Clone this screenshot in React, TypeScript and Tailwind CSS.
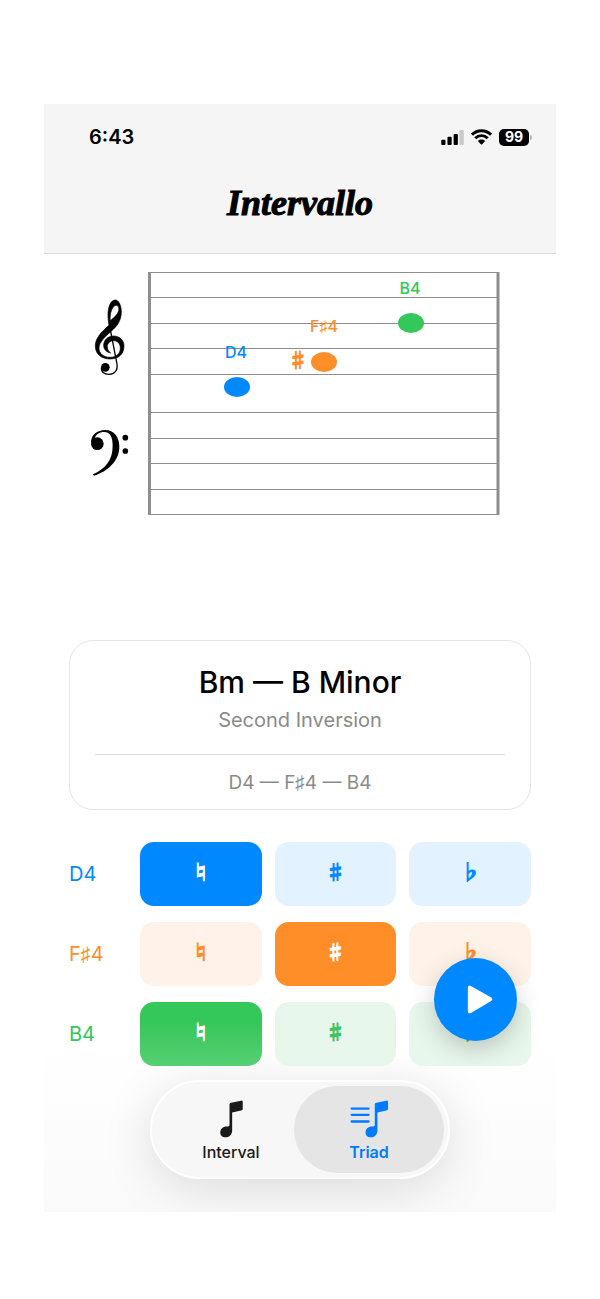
import { useState } from "react";
import clsx from "clsx";

type Accidental = "natural" | "sharp" | "flat";
type Tab = "interval" | "triad";

const ACCIDENTALS: { id: Accidental; glyph: string }[] = [
  { id: "natural", glyph: "♮" },
  { id: "sharp", glyph: "♯" },
  { id: "flat", glyph: "♭" },
];

const NOTES = [
  {
    letter: "D",
    octave: 4,
    text: "text-[#0088ff]",
    on: "bg-[#0088ff] text-white",
    off: "bg-[#e3f2ff] text-[#0088ff]",
  },
  {
    letter: "F",
    octave: 4,
    text: "text-[#ff8d28]",
    on: "bg-[#ff8d28] text-white",
    off: "bg-[#fff2e8] text-[#ff8d28]",
  },
  {
    letter: "B",
    octave: 4,
    text: "text-[#34c759]",
    on: "bg-linear-to-b from-[#34c759] from-30% to-[#56cf73] text-white",
    off: "bg-[#e8f7ec] text-[#3cc25f]",
  },
];

const STAFF_LINES = [18, 43, 69, 94, 120, 158, 184, 209, 235, 260];

function noteName(letter: string, octave: number, accidental: Accidental) {
  const sign = accidental === "sharp" ? "♯" : accidental === "flat" ? "♭" : "";
  return `${letter}${sign}${octave}`;
}

function SignalIcon() {
  return (
    <svg viewBox="0 0 69 46" className="h-[15px] w-[23px]" aria-hidden="true">
      <rect x="0" y="30" width="13" height="16" rx="3" />
      <rect x="19" y="21" width="13" height="25" rx="3" />
      <rect x="38" y="12" width="13" height="34" rx="3" />
      <rect x="56" y="0" width="13" height="46" rx="3" fill="#c8c8c8" />
    </svg>
  );
}

function WifiIcon() {
  return (
    <svg viewBox="0 0 64 48" className="h-4 w-[21px]" aria-hidden="true">
      <g fill="none" stroke="currentColor" strokeWidth="9">
        <path d="M3 17 C19 1 45 1 61 17" />
        <path d="M13 28 C24 17 40 17 51 28" />
      </g>
      <path d="M21 36 C27 30 37 30 43 36 L34 46 Q32 48 30 46 Z" />
    </svg>
  );
}

function PlayIcon() {
  return (
    <svg viewBox="0 0 76 86" className="ml-2 h-[29px] w-[26px]" fill="currentColor" aria-hidden="true">
      <path d="M2 8 Q2 -1 11 3 L70 36 Q78 42 70 48 L11 83 Q2 87 2 78 Z" />
    </svg>
  );
}

const NOTE_PATH =
  "M31 13 Q31 9 36 8 L66 2 Q71 1 71 6 V27 Q71 31 66 32 L39 38 V92 C39 104 30 113 19 113 C10 113 3 107 3 98 C3 88 11 80 22 80 C28 80 31 80 31 75 Z";

function IntervalIcon() {
  return (
    <svg viewBox="0 0 74 115" className="h-[38px] w-[25px]" fill="currentColor" aria-hidden="true">
      <path d={NOTE_PATH} />
    </svg>
  );
}

function TriadIcon() {
  return (
    <svg viewBox="0 0 118 115" className="h-[38px] w-[39px]" fill="currentColor" aria-hidden="true">
      <path d={NOTE_PATH} transform="translate(44 0)" />
      <path d="M5 26H56M5 45H56M5 65H56" stroke="currentColor" strokeWidth="7" strokeLinecap="round" />
    </svg>
  );
}

function GrandStaff({ names }: { names: string[] }) {
  return (
    <svg viewBox="0 0 512 265" className="block w-full" role="img" aria-label="Grand staff">
      {/* clefs */}
      <g transform="translate(36 36) scale(0.3333)" fill="#000">
        <path
          fillRule="evenodd"
          stroke="#000"
          strokeWidth="2"
          d="M87 106 C62 127 46 146 46 168 C46 192 64 207 90 207 C116 207 132 192 132 168 C132 150 118 138 101 138 C84 138 71 150 71 166 C71 178 79 187 92 189 C84 183 82 177 82 170 C82 160 90 152 101 152 C112 152 121 160 121 174 C121 192 108 202 90 202 C70 202 57 190 57 174 C57 156 78 138 100 118 C114 105 124 88 124 66 C124 46 116 30 106 30 C92 30 84 50 84 75 C84 88 86 98 87 106 Z M91 92 C88 68 98 46 109 46 C116 46 118 55 116 63 C112 75 103 82 91 92 Z"
        />
        <path
          d="M88 104 L111 222 C114 242 103 253 87 253 C72 253 64 245 64 234"
          fill="none"
          stroke="#000"
          strokeWidth="4"
        />
        <circle cx="76" cy="232" r="13" />
        <circle cx="52" cy="461" r="19" />
        <path d="M33 459 C32 435 52 420 75 420 C103 420 118 442 118 470 C118 515 80 545 42 557 L39 553 C74 538 98 512 98 468 C98 440 90 426 72 426 C58 426 47 433 44 446 Z" />
        <circle cx="136" cy="443" r="8.5" />
        <circle cx="136" cy="483" r="8.5" />
      </g>

      {/* staff */}
      <g stroke="#8e8e8e">
        {STAFF_LINES.map((y) => (
          <path key={y} d={`M104 ${y}.5H455`} strokeWidth="1" />
        ))}
        <path d="M105.5 18V261M454 18V261" strokeWidth="3" />
      </g>

      {/* notes */}
      <g fontFamily="Inter, sans-serif" fontSize="16" fontWeight="500" textAnchor="middle">
        <g fill="#0088ff">
          <ellipse cx="193" cy="133" rx="13" ry="10" />
          <text x="192" y="104">{names[0]}</text>
        </g>
        <g fill="#ff8d28">
          <text
            x="254"
            y="114"
            fontFamily="'Noto Sans CJK JP', 'DejaVu Sans', sans-serif"
            fontSize="20"
            fontWeight="700"
            stroke="#ff8d28"
            strokeWidth="1"
          >
            ♯
          </text>
          <ellipse cx="280" cy="108" rx="13" ry="10" />
          <text x="280" y="78">{names[1]}</text>
        </g>
        <g fill="#34c759">
          <ellipse cx="367" cy="69" rx="13" ry="10" />
          <text x="366" y="40">{names[2]}</text>
        </g>
      </g>
    </svg>
  );
}

export default function App() {
  const [tab, setTab] = useState<Tab>("triad");
  const [selected, setSelected] = useState<Accidental[]>(["natural", "sharp", "natural"]);

  const names = NOTES.map((n, i) => noteName(n.letter, n.octave, selected[i]));

  function choose(row: number, accidental: Accidental) {
    setSelected((prev) => prev.map((a, i) => (i === row ? accidental : a)));
  }

  return (
    <div className="min-h-screen bg-white px-11 py-[104px] font-['Inter',sans-serif] text-black">
      <div className="relative overflow-hidden bg-linear-to-b from-white from-85% to-[#fafafa]">
        <header className="border-b border-[#dcdcdc] bg-[#f5f5f5] pb-[26px]">
          <div className="flex h-[66px] items-center justify-between pr-6 pl-[45px]">
            <span className="text-xl font-semibold">6:43</span>
            <div className="flex items-center gap-[7px]">
              <SignalIcon />
              <WifiIcon />
              <div className="flex items-center gap-px">
                <span className="flex h-[17px] w-[30px] items-center justify-center rounded-[5px] bg-black text-sm font-bold text-white">
                  99
                </span>
                <span className="h-[5px] w-[2px] rounded-r-full bg-[#b5b5b5]" />
              </div>
            </div>
          </div>
          <h1 className="pt-[10px] text-center font-['Liberation_Serif',serif] text-4xl leading-[47px] font-bold italic [-webkit-text-stroke:1px]">
            Intervallo
          </h1>
        </header>

        <GrandStaff names={names} />

        <main className="px-[25px] pt-[121px]">
          <section className="rounded-3xl border border-[#e4e4e4] px-[25px] pt-5 pb-[10px] text-center">
            <h2 className="text-3xl leading-[42px] font-medium">Bm — B Minor</h2>
            <p className="text-xl leading-[34px] text-[#8a8a8a]">Second Inversion</p>
            <hr className="mt-[17px] mb-3 border-[#dedede]" />
            <p className="text-[19px] leading-8 text-[#8a8a8a]">{names.join(" — ")}</p>
          </section>

          <div className="mt-8 flex flex-col gap-4">
            {NOTES.map((note, row) => (
              <div key={note.letter} className="flex items-center" role="group" aria-label={names[row]}>
                <span className={clsx("w-[71px] shrink-0 text-xl", note.text)}>{names[row]}</span>
                <div className="grid flex-1 grid-cols-3 gap-[13px]">
                  {ACCIDENTALS.map((acc) => (
                    <button
                      key={acc.id}
                      type="button"
                      aria-label={acc.id}
                      aria-pressed={selected[row] === acc.id}
                      onClick={() => choose(row, acc.id)}
                      className={clsx(
                        "h-16 rounded-[14px] pb-1 font-['Noto_Sans_CJK_JP','DejaVu_Sans',sans-serif] text-xl font-bold [-webkit-text-stroke:1px]",
                        selected[row] === acc.id ? note.on : note.off
                      )}
                    >
                      {acc.glyph}
                    </button>
                  ))}
                </div>
              </div>
            ))}
          </div>
        </main>

        <nav className="mx-auto mt-[14px] mb-[33px] flex h-[99px] w-fit rounded-full border-2 border-white bg-[#f7f7f7] p-1 shadow-[0_10px_50px_rgba(0,0,0,0.13)]">
          <button
            type="button"
            aria-pressed={tab === "interval"}
            onClick={() => setTab("interval")}
            className={clsx(
              "flex w-[150px] flex-col items-center justify-center gap-[2px] rounded-full pt-1 text-base font-medium",
              tab === "interval" ? "bg-[#e5e5e5] text-[#007aff]" : "text-[#1a1a1a]"
            )}
          >
            <IntervalIcon />
            Interval
          </button>
          <button
            type="button"
            aria-pressed={tab === "triad"}
            onClick={() => setTab("triad")}
            className={clsx(
              "-ml-3 flex w-[150px] flex-col items-center justify-center gap-[2px] rounded-full pt-1 text-base font-semibold",
              tab === "triad" ? "bg-[#e5e5e5] text-[#007aff]" : "text-[#1a1a1a]"
            )}
          >
            <TriadIcon />
            Triad
          </button>
        </nav>

        {/* floating play button */}
        <button
          type="button"
          aria-label="Play"
          className="absolute right-[39px] bottom-[171px] flex h-[83px] w-[83px] items-center justify-center rounded-full bg-[#0088ff] text-white shadow-[0_8px_24px_rgba(0,0,0,0.2)]"
        >
          <PlayIcon />
        </button>
      </div>
    </div>
  );
}
